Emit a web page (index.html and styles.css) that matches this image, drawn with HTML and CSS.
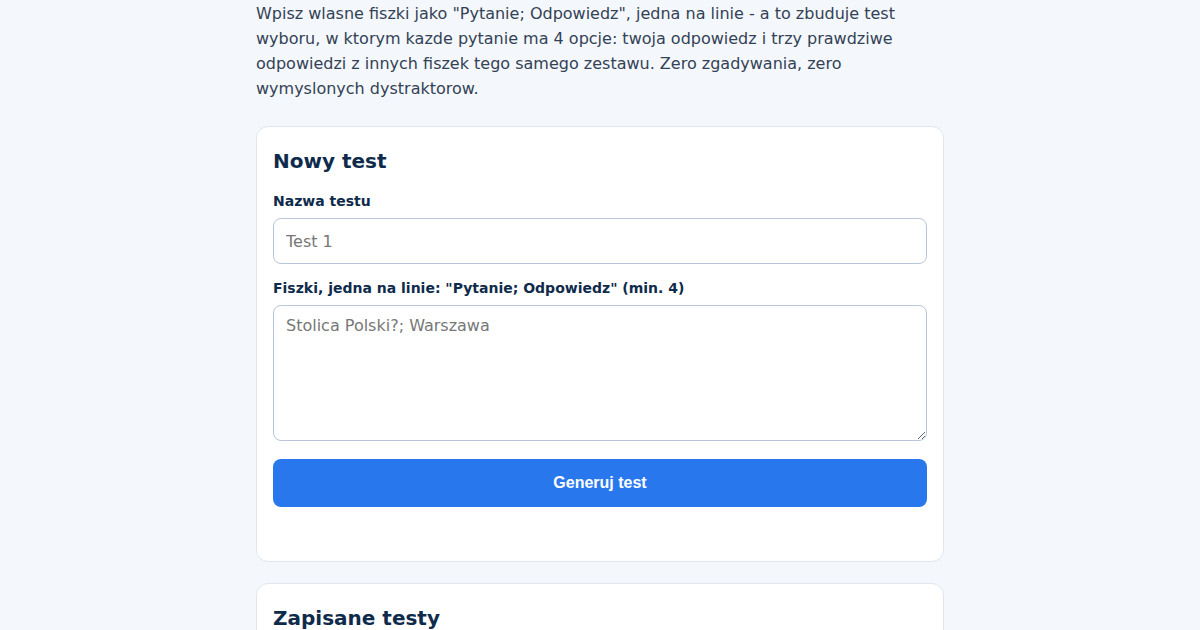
FILE: index.html
```html
<!DOCTYPE html>
<html lang="pl">
<head>
    <meta charset="UTF-8">
    <meta name="viewport" content="width=device-width, initial-scale=1.0">
    <title>Fiszki - test wyboru</title>
    <link rel="stylesheet" href="styles.css">
</head>
<body>
    <main class="page">
        <p class="intro">Wpisz wlasne fiszki jako "Pytanie; Odpowiedz", jedna na linie - a to zbuduje test wyboru, w ktorym kazde pytanie ma 4 opcje: twoja odpowiedz i trzy prawdziwe odpowiedzi z innych fiszek tego samego zestawu. Zero zgadywania, zero wymyslonych dystraktorow.</p>

        <section class="card">
            <h2>Nowy test</h2>
            <div class="field">
                <label for="testName">Nazwa testu</label>
                <input type="text" id="testName" class="text-input" placeholder="Test 1">
            </div>
            <div class="field">
                <label for="cards">Fiszki, jedna na linie: "Pytanie; Odpowiedz" (min. 4)</label>
                <textarea id="cards" class="text-input cards-input" placeholder="Stolica Polski?; Warszawa"></textarea>
            </div>
            <button class="btn-primary" type="button">Generuj test</button>
        </section>

        <section class="card">
            <h2>Zapisane testy</h2>
            <p class="empty">Brak zapisanych testow.</p>
        </section>
    </main>
</body>
</html>
```

FILE: styles.css
```css
body {
    margin: 0;
    font-family: "DejaVu Sans", sans-serif;
    background: #f4f8fc;
    color: #334155;
}
.page {
    max-width: 688px;
    margin: 0 auto;
    padding-top: 1px;
}
.intro {
    margin: 0 0 25px;
    font-size: 16px;
    line-height: 25px;
}
.card {
    background: #fff;
    border: 1px solid #dfe6f0;
    border-radius: 12px;
    padding: 18px 16px 54px;
    margin-bottom: 21px;
}
.card h2 {
    margin: 0 0 16px;
    font-size: 20px;
    line-height: 32px;
    color: #0f2b4c;
}
.field {
    margin-bottom: 16px;
}
.field label {
    display: block;
    margin-bottom: 9px;
    font-size: 14px;
    font-weight: bold;
    color: #0f2b4c;
}
.text-input {
    display: block;
    box-sizing: border-box;
    width: 100%;
    height: 46px;
    padding: 10px 12px;
    border: 1px solid #b9c5d8;
    border-radius: 8px;
    font-family: "DejaVu Sans", sans-serif;
    font-size: 16px;
    color: #334155;
    background: #fff;
}
.text-input::placeholder {
    color: #777;
}
.cards-input {
    height: 136px;
    resize: vertical;
}
.btn-primary {
    display: block;
    width: 100%;
    height: 48px;
    margin-top: 18px;
    border: none;
    border-radius: 8px;
    background: #2877ec;
    color: #fff;
    font-family: "Liberation Sans", Arial, sans-serif;
    font-size: 16px;
    font-weight: bold;
    cursor: pointer;
}
.empty {
    margin: 0;
    font-size: 15px;
    color: #64748b;
}
```
